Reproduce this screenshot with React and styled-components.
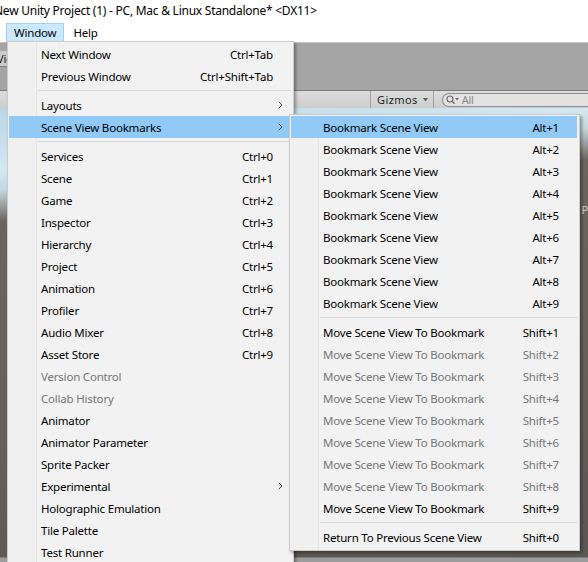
import React from 'react';
import styled, { createGlobalStyle } from 'styled-components';

const GlobalStyle = createGlobalStyle`
  html, body {
    margin: 0;
    padding: 0;
    background: #ffffff;
  }
  * {
    box-sizing: border-box;
  }
`;

const UI_FONT = `"Noto Sans", "Open Sans", "Liberation Sans", sans-serif`;

const Frame = styled.div`
  width: 588px;
  height: 562px;
  position: relative;
  overflow: hidden;
  display: flex;
  flex-direction: column;
  background: #ffffff;
  font-family: ${UI_FONT};
  font-size: 11.5px;
  letter-spacing: -0.2px;
  color: #000000;
`;

const TitleBar = styled.div`
  height: 22px;
  line-height: 22px;
  font-size: 12px;
  letter-spacing: -0.25px;
  text-indent: -6px;
  white-space: nowrap;
  background: #ffffff;
  flex-shrink: 0;
`;

const MenuBar = styled.div`
  height: 20px;
  display: flex;
  align-items: center;
  padding-left: 6px;
  gap: 1px;
  background: #ffffff;
  flex-shrink: 0;
`;

const BarItem = styled.div`
  height: 19px;
  line-height: 17px;
  padding: 0 7px;
  border: 1px solid ${(p) => (p.$open ? '#99d1ff' : 'transparent')};
  background: ${(p) => (p.$open ? '#cce8ff' : 'transparent')};
`;

const Editor = styled.div`
  flex: 1;
  position: relative;
  display: flex;
  flex-direction: column;
  background: #a5a5a5;
`;

const MainToolbar = styled.div`
  height: 48px;
  flex-shrink: 0;
  border-top: 1px solid #c4c4c4;
  background: #a5a5a5;
  display: flex;
  flex-direction: column;
`;

const ToolStrip = styled.div`
  height: 16px;
  margin-top: 8px;
  width: 8px;
  border-bottom: 1px solid #7f7f7f;
  background: #cbcbcb;
  overflow: hidden;
  white-space: nowrap;
  font-size: 11px;
  line-height: 15px;
  text-indent: -3px;
  color: #1a1a1a;
`;

const SceneToolbar = styled.div`
  height: 18px;
  flex-shrink: 0;
  border-top: 1px solid #7a7a7a;
  background: linear-gradient(#dcdcdc, #cdcdcd);
  display: flex;
  align-items: center;
  padding-left: 370px;
  font-size: 11px;
`;

const ToolbarButton = styled.div`
  height: 17px;
  display: flex;
  align-items: center;
  gap: 5px;
  padding: 0 5px 0 6px;
  border-left: 1px solid #a0a0a0;
  border-right: 1px solid #a0a0a0;
  letter-spacing: 0.4px;
  color: #1e1e1e;
`;

const SearchField = styled.div`
  height: 14px;
  margin-left: 8px;
  flex: 1;
  display: flex;
  align-items: center;
  gap: 1px;
  padding-left: 3px;
  border: 1px solid #8e8e8e;
  border-right: none;
  border-radius: 8px 0 0 8px;
  background: #e2e2e2;
  color: #8a8a8a;
  font-size: 11px;
  line-height: 12px;
`;

const SceneView = styled.div`
  flex: 1;
  position: relative;
  background:
    linear-gradient(174deg, #b7d6e4 0%, #d3e8f1 12%, #c4d7de 16%, #6c645d 22%, #686058 60%, #5d5752 100%);
`;

const SceneFooter = styled.div`
  position: absolute;
  left: 0;
  right: 0;
  bottom: 0;
  height: 5px;
  background: #9c9c9c;
  border-top: 1px solid #7b7b7b;
`;

const SceneLabel = styled.div`
  position: absolute;
  right: 0;
  top: 94px;
  color: #cfcfcf;
  font-size: 11px;
`;

/* menus float over the editor */
const Menu = styled.div`
  position: absolute;
  left: ${(p) => p.$left}px;
  top: ${(p) => p.$top}px;
  width: ${(p) => p.$width}px;
  padding: 1px 2px 2px 1px;
  border: 1px solid #cccccc;
  background: linear-gradient(to right, #f0f0f0 28px, #e6e6e6 28px, #e6e6e6 29px, #f2f2f2 29px);
  box-shadow: 2px 2px 3px rgba(0, 0, 0, 0.35);
  z-index: ${(p) => p.$z};
`;

const Item = styled.div`
  height: 22px;
  display: flex;
  align-items: center;
  padding-left: 32px;
  background: ${(p) => (p.$active ? '#91c9f7' : 'transparent')};
  color: ${(p) => (p.$disabled ? '#767676' : '#000000')};
  white-space: nowrap;
`;

const Label = styled.span`
  flex: 1;
`;

const Shortcut = styled.span`
  text-align: right;
`;

const ArrowCell = styled.span`
  width: 18px;
  height: 22px;
  flex-shrink: 0;
  display: flex;
  align-items: center;
  padding-left: 5px;
`;

const Separator = styled.div`
  height: 7px;
  display: flex;
  align-items: center;
  padding-left: 29px;
  &::after {
    content: '';
    flex: 1;
    height: 1px;
    background: #d7d7d7;
  }
`;

const Chevron = () => (
  <svg width="5" height="8" viewBox="0 0 5 8">
    <polyline points="0.8,0.8 4,4 0.8,7.2" fill="none" stroke="#444" strokeWidth="1" />
  </svg>
);

const SearchIcon = () => (
  <svg width="15" height="10" viewBox="0 0 15 10">
    <circle cx="4" cy="4" r="3" fill="none" stroke="#6a6a6a" strokeWidth="1.1" />
    <line x1="6.2" y1="6.2" x2="8.5" y2="8.8" stroke="#6a6a6a" strokeWidth="1.3" />
    <polygon points="9,3 13,3 11,5.5" fill="#6a6a6a" />
  </svg>
);

const DropTriangle = () => (
  <svg width="5" height="4" viewBox="0 0 5 4">
    <polygon points="0,0 5,0 2.5,3.5" fill="#5a5a5a" />
  </svg>
);

const MenuRow = ({ item }) => {
  if (item.sep) return <Separator />;
  return (
    <Item $active={item.active} $disabled={item.disabled}>
      <Label>{item.label}</Label>
      {item.key && <Shortcut>{item.key}</Shortcut>}
      <ArrowCell>{item.sub && <Chevron />}</ArrowCell>
    </Item>
  );
};

const windowItems = [
  { label: 'Next Window', key: 'Ctrl+Tab' },
  { label: 'Previous Window', key: 'Ctrl+Shift+Tab' },
  { sep: true },
  { label: 'Layouts', sub: true },
  { label: 'Scene View Bookmarks', sub: true, active: true },
  { sep: true },
  { label: 'Services', key: 'Ctrl+0' },
  { label: 'Scene', key: 'Ctrl+1' },
  { label: 'Game', key: 'Ctrl+2' },
  { label: 'Inspector', key: 'Ctrl+3' },
  { label: 'Hierarchy', key: 'Ctrl+4' },
  { label: 'Project', key: 'Ctrl+5' },
  { label: 'Animation', key: 'Ctrl+6' },
  { label: 'Profiler', key: 'Ctrl+7' },
  { label: 'Audio Mixer', key: 'Ctrl+8' },
  { label: 'Asset Store', key: 'Ctrl+9' },
  { label: 'Version Control', disabled: true },
  { label: 'Collab History', disabled: true },
  { label: 'Animator' },
  { label: 'Animator Parameter' },
  { label: 'Sprite Packer' },
  { label: 'Experimental', sub: true },
  { label: 'Holographic Emulation' },
  { label: 'Tile Palette' },
  { label: 'Test Runner' },
];

const bookmarkItems = [
  ...Array.from({ length: 9 }, (_, i) => ({
    label: 'Bookmark Scene View',
    key: `Alt+${i + 1}`,
    active: i === 0,
  })),
  { sep: true },
  ...Array.from({ length: 9 }, (_, i) => ({
    label: 'Move Scene View To Bookmark',
    key: `Shift+${i + 1}`,
    disabled: i > 0 && i < 8,
  })),
  { sep: true },
  { label: 'Return To Previous Scene View', key: 'Shift+0' },
];

const App = () => (
  <>
    <GlobalStyle />
    <Frame>
      <TitleBar>New Unity Project (1) - PC, Mac &amp; Linux Standalone* &lt;DX11&gt;</TitleBar>
      <MenuBar>
        <BarItem $open>Window</BarItem>
        <BarItem>Help</BarItem>
      </MenuBar>
      <Editor>
        <MainToolbar>
          <ToolStrip>View</ToolStrip>
        </MainToolbar>
        <SceneToolbar>
          <ToolbarButton>
            Gizmos <DropTriangle />
          </ToolbarButton>
          <SearchField>
            <SearchIcon />
            All
          </SearchField>
        </SceneToolbar>
        <SceneView>
          <SceneLabel>P</SceneLabel>
          <SceneFooter />
        </SceneView>

        <Menu $left={7} $top={-1} $width={287} $z={2}>
          {windowItems.map((item, i) => (
            <MenuRow key={i} item={item} />
          ))}
        </Menu>
        <Menu $left={289} $top={72} $width={291} $z={3}>
          {bookmarkItems.map((item, i) => (
            <MenuRow key={i} item={item} />
          ))}
        </Menu>
      </Editor>
    </Frame>
  </>
);

export default App;
